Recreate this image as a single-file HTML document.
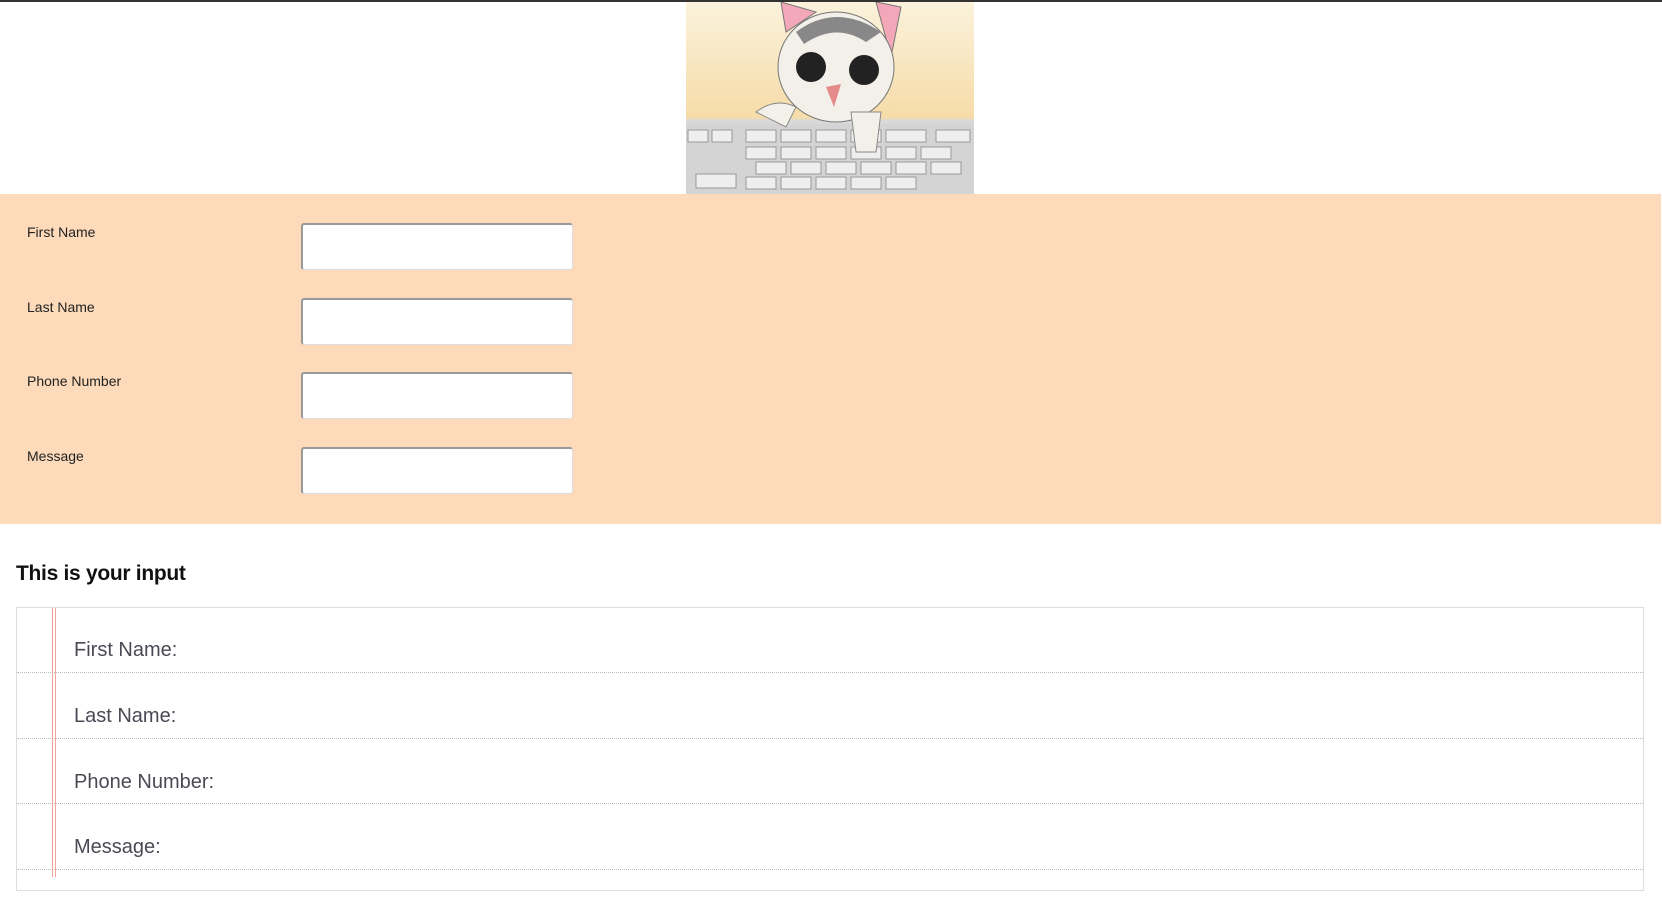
<!DOCTYPE html>
<html><head><meta charset="utf-8"><style>
*{margin:0;padding:0;box-sizing:border-box}
body{width:1662px;height:902px;background:#fff;font-family:"Liberation Sans",Arial,sans-serif;position:relative;overflow:hidden}
.top{position:absolute;left:0;top:0;width:1662px;height:2px;background:#333}
.img{position:absolute;left:686px;top:2px;width:288px;height:192px;background:linear-gradient(#fbf2dc 0%,#f6dca8 60%,#d9d9d9 62%,#c8c8c8 100%);overflow:hidden}
.band{position:absolute;left:0;top:194px;width:1661px;height:330px;background:#fddab9}
.lab{position:absolute;left:27px;font-size:14px;color:#222}
.inp{position:absolute;left:301px;width:272px;height:47px;background:#fff;border:1px solid #ddd;border-top:2px solid #999;border-left:2px solid #999;border-radius:3px}
h2{position:absolute;left:16px;top:562px;font-size:21px;font-weight:bold;color:#111;letter-spacing:-0.3px}
.box{position:absolute;left:16px;top:607px;width:1628px;height:284px;border:1px solid #ddd}
.red{position:absolute;top:0;width:1px;height:269px;background:#f3a39a}
.row{position:absolute;left:0;width:1626px;border-bottom:1px dotted #bbb;height:1px}
.t{position:absolute;left:57px;font-size:20px;color:#4a4a55}
</style></head><body>
<div class="top"></div>
<div class="img">
<svg width="288" height="192" viewBox="0 0 288 192">
<rect x="0" y="122" width="288" height="70" fill="#d4d4d4"/>
<g fill="#eee" stroke="#999" stroke-width="1">
<rect x="2" y="128" width="20" height="12"/><rect x="26" y="128" width="20" height="12"/><rect x="60" y="128" width="30" height="12"/><rect x="95" y="128" width="30" height="12"/><rect x="130" y="128" width="30" height="12"/><rect x="165" y="128" width="30" height="12"/><rect x="200" y="128" width="40" height="12"/><rect x="250" y="128" width="34" height="12"/>
<rect x="60" y="145" width="30" height="12"/><rect x="95" y="145" width="30" height="12"/><rect x="130" y="145" width="30" height="12"/><rect x="165" y="145" width="30" height="12"/><rect x="200" y="145" width="30" height="12"/><rect x="235" y="145" width="30" height="12"/>
<rect x="70" y="160" width="30" height="12"/><rect x="105" y="160" width="30" height="12"/><rect x="140" y="160" width="30" height="12"/><rect x="175" y="160" width="30" height="12"/><rect x="210" y="160" width="30" height="12"/><rect x="245" y="160" width="30" height="12"/>
<rect x="10" y="172" width="40" height="14"/><rect x="60" y="175" width="30" height="12"/><rect x="95" y="175" width="30" height="12"/><rect x="130" y="175" width="30" height="12"/><rect x="165" y="175" width="30" height="12"/><rect x="200" y="175" width="30" height="12"/>
</g>
<path d="M100 30 L95 0 L130 10 Z M190 0 L215 5 L205 55 Z" fill="#f2a8b8" stroke="#777"/>
<ellipse cx="150" cy="65" rx="58" ry="55" fill="#f3f0ea" stroke="#777"/>
<path d="M110 30 Q150 0 195 30 L180 40 Q150 20 118 42Z" fill="#888"/>
<circle cx="125" cy="65" r="15" fill="#222"/><circle cx="178" cy="68" r="15" fill="#222"/>
<path d="M140 85 L155 82 L148 105Z" fill="#e58b8b"/>
<path d="M70 110 Q90 95 110 105 L100 125 Z M165 110 L195 110 L190 150 L170 150Z" fill="#f3f0ea" stroke="#888"/>
</svg>
</div>
<div class="band"></div>
<div class="lab" style="top:224px">First Name</div>
<div class="lab" style="top:299px">Last Name</div>
<div class="lab" style="top:373px">Phone Number</div>
<div class="lab" style="top:448px">Message</div>
<div class="inp" style="top:223px"></div>
<div class="inp" style="top:298px"></div>
<div class="inp" style="top:372px"></div>
<div class="inp" style="top:447px"></div>
<h2>This is your input</h2>
<div class="box">
<div class="red" style="left:35px"></div><div class="red" style="left:38px"></div>
<div class="row" style="top:64px"></div>
<div class="row" style="top:130px"></div>
<div class="row" style="top:195px"></div>
<div class="row" style="top:261px"></div>
<div class="t" style="top:31px">First Name:</div>
<div class="t" style="top:97px">Last Name:</div>
<div class="t" style="top:163px">Phone Number:</div>
<div class="t" style="top:228px">Message:</div>
</div>
</body></html>
